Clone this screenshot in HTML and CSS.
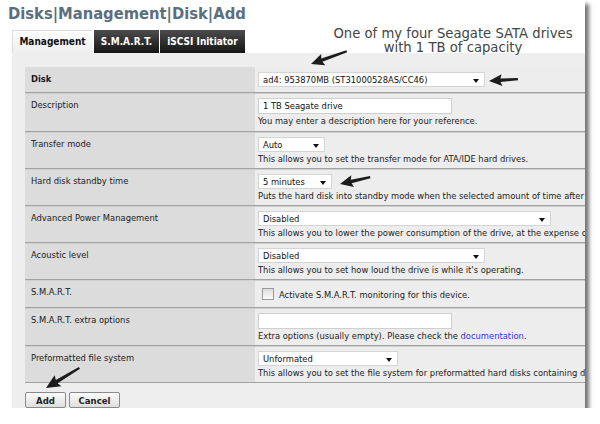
FILE: index.html
```
<!DOCTYPE html>
<html>
<head>
<meta charset="utf-8">
<link rel="stylesheet" href="styles.css">
</head>
<body>
<div class="shot">
  <h1 class="title">Disks|Management|Disk|Add</h1>
  <ul class="tabs">
    <li class="tab tab-active tab-mgmt">Management</li>
    <li class="tab tab-smart">S.M.A.R.T.</li>
    <li class="tab tab-iscsi">iSCSI Initiator</li>
  </ul>
  <div class="panel">
    <table class="form">
      <tr class="row-disk">
        <td class="label"><b>Disk</b></td>
        <td class="value"><div class="select w-disk">ad4: 953870MB (ST31000528AS/CC46)</div></td>
      </tr>
      <tr class="row-input">
        <td class="label">Description</td>
        <td class="value"><div class="input w-input">1 TB Seagate drive</div><div class="help">You may enter a description here for your reference.</div></td>
      </tr>
      <tr>
        <td class="label">Transfer mode</td>
        <td class="value"><div class="select w-transfer">Auto</div><div class="help">This allows you to set the transfer mode for ATA/IDE hard drives.</div></td>
      </tr>
      <tr>
        <td class="label">Hard disk standby time</td>
        <td class="value"><div class="select w-standby">5 minutes</div><div class="help">Puts the hard disk into standby mode when the selected amount of time after the last hard disk access has been elapsed.</div></td>
      </tr>
      <tr>
        <td class="label">Advanced Power Management</td>
        <td class="value"><div class="select w-apm">Disabled</div><div class="help">This allows you to lower the power consumption of the drive, at the expense of performance.</div></td>
      </tr>
      <tr>
        <td class="label">Acoustic level</td>
        <td class="value"><div class="select w-disk">Disabled</div><div class="help">This allows you to set how loud the drive is while it's operating.</div></td>
      </tr>
      <tr class="row-check">
        <td class="label">S.M.A.R.T.</td>
        <td class="value"><div class="check-line"><span class="checkbox"></span>Activate S.M.A.R.T. monitoring for this device.</div></td>
      </tr>
      <tr>
        <td class="label">S.M.A.R.T. extra options</td>
        <td class="value"><div class="input w-input"></div><div class="help">Extra options (usually empty). Please check the <a class="link" href="#">documentation</a>.</div></td>
      </tr>
      <tr>
        <td class="label">Preformatted file system</td>
        <td class="value"><div class="select w-fs">Unformated</div><div class="help">This allows you to set the file system for preformatted hard disks containing data.</div></td>
      </tr>
    </table>
    <div class="buttons">
      <button class="btn btn-add">Add</button>
      <button class="btn btn-cancel">Cancel</button>
    </div>
  </div>
  <div class="note">One of my four Seagate SATA drives<br>with 1 TB of capacity</div>
  <svg class="arrows" width="600" height="424" viewBox="0 0 600 424">
    <g transform="translate(311,64) rotate(-19.9)">
      <polygon points="0,0 13,-6 11.5,-1.6 38,-1 38,1.2 11.5,1.8 13,6"/>
    </g>
    <g transform="translate(489,81) rotate(-3.9)">
      <polygon points="0,0 13,-6 11.5,-1.6 29,-1 29,1.2 11.5,1.8 13,6"/>
    </g>
    <g transform="translate(340,184) rotate(-13.1)">
      <polygon points="0,0 13,-6 11.5,-1.6 31,-1 31,1.2 11.5,1.8 13,6"/>
    </g>
    <g transform="translate(46,388) rotate(-31.2)">
      <polygon points="0,0 14,-6.5 12.5,-1.7 39,-1 39,1.2 12.5,1.9 14,6.5"/>
    </g>
  </svg>
</div>
</body>
</html>
```
FILE: styles.css
```
html, body {
  margin: 0;
  padding: 0;
  background: #fff;
}

.shot {
  position: relative;
  width: 585px;
  height: 408px;
  background: #fff;
  overflow: hidden;
  display: flex;
  flex-direction: column;
  box-shadow: 4px 4px 4px rgba(0, 0, 0, 0.55);
  font-family: "DejaVu Sans Condensed", "Liberation Sans", sans-serif;
  color: #1a1a1a;
}

.title {
  margin: 4px 0 7px 8px;
  font-size: 16.4px;
  font-weight: bold;
  line-height: 19px;
  color: #5a6e80;
  white-space: nowrap;
}

.tabs {
  list-style: none;
  margin: 0 0 0 12px;
  padding: 0;
  display: flex;
  gap: 1px;
  height: 23px;
}

.tab {
  text-align: center;
  line-height: 23px;
  font-size: 10px;
  font-weight: bold;
  color: #fff;
  background: linear-gradient(#4c4c4c, #151515);
  white-space: nowrap;
}

.tab-mgmt { width: 81px; }
.tab-smart { width: 65px; }
.tab-iscsi { width: 85px; }

.tab-active {
  color: #111;
  background: linear-gradient(#ffffff, #eeeeee);
  box-shadow: inset 1px 1px 0 #dcdcdc;
}

.panel {
  flex: 1;
  margin-left: 12px;
  background: #eeeeee;
  padding: 14px 0 0 13px;
  min-width: 0;
}

.form {
  table-layout: fixed;
  width: 800px;
  border-collapse: collapse;
  border-spacing: 0;
  font-size: 9.3px;
}

.form td {
  vertical-align: top;
  border-bottom: 1px solid #a2a2a2;
  box-shadow: inset 0 1px 0 #cfcfcf;
  padding: 5px 3px 3px 3px;
}

.form .label {
  width: 221px;
  background: #dcdcdc;
  padding-left: 6px;
  line-height: 13px;
  white-space: nowrap;
}

.form .value {
  background: #ededed;
  white-space: nowrap;
}

.row-disk td {
  box-shadow: none;
  padding-bottom: 5px;
}

.row-input .value {
  padding-bottom: 4px;
}

.row-check .value {
  padding-top: 6px;
  padding-bottom: 5px;
}

.select,
.input {
  box-sizing: border-box;
  position: relative;
  height: 15px;
  line-height: 13px;
  padding-left: 4px;
  background: #fff;
  border: 1px solid #d4d4d4;
  color: #111;
}

.input {
  height: 16px;
  line-height: 14px;
  border-color: #cfcfcf;
}

.select::after {
  content: "";
  position: absolute;
  right: 5px;
  top: 6px;
  border-left: 3px solid transparent;
  border-right: 3px solid transparent;
  border-top: 4px solid #111;
}

.w-disk { width: 227px; }
.w-transfer { width: 67px; }
.w-standby { width: 74px; }
.w-apm { width: 293px; }
.w-fs { width: 140px; }
.w-input { width: 194px; }

.help {
  line-height: 13px;
  color: #1a1a1a;
}

.check-line {
  display: flex;
  align-items: center;
  height: 16px;
  gap: 5px;
  padding-left: 4px;
}

.checkbox {
  box-sizing: border-box;
  width: 12px;
  height: 12px;
  border: 1px solid #9a9a9a;
  background: linear-gradient(#dcdcdc, #fafafa);
}

.link {
  color: #3535c8;
  text-decoration: none;
}

.buttons {
  display: flex;
  gap: 3px;
  margin-top: 9px;
}

.btn {
  box-sizing: border-box;
  height: 16px;
  padding: 0;
  font-family: inherit;
  font-size: 9.5px;
  font-weight: bold;
  color: #222;
  background: linear-gradient(#fbfbfb, #dedede);
  border: 1px solid #8a8a8a;
  border-radius: 2px;
}

.btn-add { width: 41px; }
.btn-cancel { width: 51px; }

.note {
  position: absolute;
  left: 328px;
  top: 27px;
  width: 250px;
  text-align: center;
  font-family: "DejaVu Sans", sans-serif;
  font-size: 13.2px;
  line-height: 14px;
  color: #444;
}

.arrows {
  position: absolute;
  left: 0;
  top: 0;
  pointer-events: none;
  fill: #1c1c1c;
}
```
